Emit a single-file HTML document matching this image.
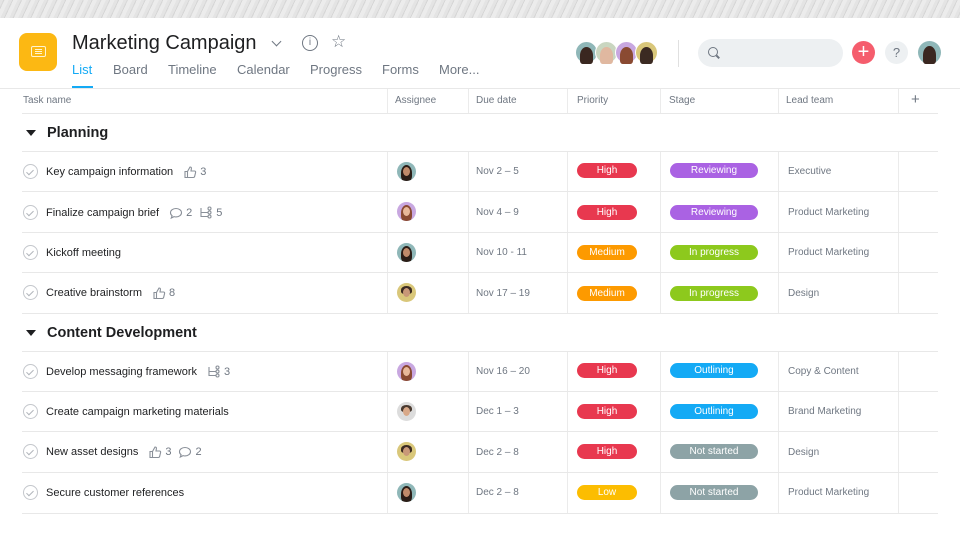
<!DOCTYPE html>
<html><head><meta charset="utf-8"><style>
*{margin:0;padding:0;box-sizing:border-box}
body{width:960px;height:547px;position:relative;background:#fff;font-family:"Liberation Sans",Arial,sans-serif;overflow:hidden;color:#1e1f21}
.a{position:absolute}
.top{left:0;top:0;width:960px;height:18px;background:repeating-linear-gradient(115deg,#e4e4e4 0 3px,#d6d6d6 3px 4px,#ececec 4px 8px)}
.tab{top:62px;font-size:13px;color:#6f7782}
.hl{left:22px;width:916px;height:1px;background:#e8e8e8}
.vl{width:1px;background:#ebebeb}
.ch{top:95px;font-size:10px;color:#6f7782}
.sec{left:47px;font-size:14.5px;font-weight:bold;color:#1e1f21}
.tri{left:26px;width:0;height:0;border-left:5px solid transparent;border-right:5px solid transparent;border-top:6px solid #1e1f21}
.chk{left:23px;width:15px;height:15px;border:1px solid #c4c7cc;border-radius:50%}
.chk:after{content:"";position:absolute;left:4px;top:3px;width:3px;height:6px;border:solid #b0b4ba;border-width:0 1px 1px 0;transform:rotate(45deg)}
.tn{left:46px;font-size:11px;color:#1e1f21;display:flex;align-items:center;gap:4px;height:14px}
.meta{font-size:11px;color:#6f7782;display:inline-flex;align-items:center;gap:3px;margin-left:6px}
.meta svg{width:14px;height:14px;fill:none;stroke:#8a9099;stroke-width:1.1}
.av{left:397px;width:19px;height:19px;border-radius:50%;overflow:hidden}
.av i{position:absolute;left:4px;top:3px;width:11px;height:16px;border-radius:50% 50% 30% 30%;background:#2b1d17}
.av b{position:absolute;left:6px;top:5px;width:7px;height:9px;border-radius:50%;background:#c08a6a}
.dt{left:476px;font-size:10px;color:#6f7782}
.p{left:577px;width:60px;height:15px;border-radius:8px;color:#fff;font-size:10px;text-align:center;line-height:15px}
.s{left:670px;width:88px;height:15px;border-radius:8px;color:#fff;font-size:10px;text-align:center;line-height:15px}
.lt{left:788px;font-size:10px;color:#6f7782}
</style></head><body>
<svg width="0" height="0" style="position:absolute">
<symbol id="th" viewBox="0 0 14 14"><path d="M2 6.5h2.5v6H2zM4.5 6.5l2.5-4.5c1 0 1.6.6 1.4 1.6L8 6h3.5c.8 0 1.3.7 1.1 1.4l-1 4.2c-.2.6-.6.9-1.2.9H4.5"/></symbol>
<symbol id="cm" viewBox="0 0 14 14"><path d="M7 2.5c3 0 5.5 1.8 5.5 4.2S10 10.9 7 10.9c-.7 0-1.3-.1-1.9-.3L2.3 12l.8-2.3C2 8.9 1.5 7.9 1.5 6.7 1.5 4.3 4 2.5 7 2.5z"/></symbol>
<symbol id="st" viewBox="0 0 14 14"><path d="M2 2v8.5h7M2 6.5h7"/><circle cx="10.5" cy="6.5" r="1.5"/><circle cx="10.5" cy="10.5" r="1.5"/><circle cx="10.5" cy="2.5" r="1.5"/></symbol>
</svg>
<div class="a top"></div>
<div class="a" style="left:19px;top:33px;width:38px;height:38px;border-radius:8px;background:#fcb813"></div>
<div class="a" style="left:31px;top:46px;width:15px;height:11px;border:1.5px solid #fff4d0;border-radius:2px"></div>
<div class="a" style="left:35px;top:49px;width:7px;height:1px;background:#fff4d0;box-shadow:0 2px 0 #fff4d0,0 4px 0 #fff4d0"></div>
<div class="a" style="left:72px;top:32px;font-size:20px;color:#1e1f21">Marketing Campaign</div>
<div class="a" style="left:273px;top:38px;width:7px;height:7px;border:solid #6f7782;border-width:0 1.5px 1.5px 0;transform:rotate(45deg)"></div>
<div class="a" style="left:302px;top:35px;width:16px;height:16px;border:1.3px solid #6f7782;border-radius:50%;font-size:10px;color:#6f7782;text-align:center;line-height:14px">i</div>
<div class="a" style="left:331px;top:32px;font-size:17px;color:#6f7782">☆</div>
<div class="a tab" style="left:72px;color:#14aaf5">List</div>
<div class="a" style="left:72px;top:86px;width:21px;height:2px;background:#14aaf5"></div>
<div class="a tab" style="left:113px">Board</div>
<div class="a tab" style="left:168px">Timeline</div>
<div class="a tab" style="left:237px">Calendar</div>
<div class="a tab" style="left:310px">Progress</div>
<div class="a tab" style="left:382px">Forms</div>
<div class="a tab" style="left:439px">More...</div>
<div class="a" style="left:575px;top:41px;width:23px;height:23px;border-radius:50%;background:#8fb7b8;border:1.5px solid #fff"></div>
<div class="a" style="left:595px;top:41px;width:23px;height:23px;border-radius:50%;background:#c9d6c0;border:1.5px solid #fff"></div>
<div class="a" style="left:615px;top:41px;width:23px;height:23px;border-radius:50%;background:#c8a7e0;border:1.5px solid #fff"></div>
<div class="a" style="left:635px;top:41px;width:23px;height:23px;border-radius:50%;background:#d9c77a;border:1.5px solid #fff"></div>
<div class="a" style="left:580px;top:47px;width:13px;height:17px;border-radius:50% 50% 20% 20%;background:#3a2720"></div>
<div class="a" style="left:600px;top:47px;width:13px;height:17px;border-radius:50% 50% 20% 20%;background:#e0b8a0"></div>
<div class="a" style="left:620px;top:47px;width:13px;height:17px;border-radius:50% 50% 20% 20%;background:#8a4a32"></div>
<div class="a" style="left:640px;top:47px;width:13px;height:17px;border-radius:50% 50% 20% 20%;background:#3b2a22"></div>
<div class="a" style="left:678px;top:40px;width:1px;height:27px;background:#e0e0e0"></div>
<div class="a" style="left:698px;top:39px;width:145px;height:28px;border-radius:14px;background:#edf0f2"></div>
<div class="a" style="left:708px;top:47px;width:10px;height:10px;border:1.5px solid #6f7782;border-radius:50%"></div>
<div class="a" style="left:716px;top:56px;width:4px;height:1.5px;background:#6f7782;transform:rotate(45deg)"></div>
<div class="a" style="left:852px;top:41px;width:23px;height:23px;border-radius:50%;background:#f55d6d;color:#fff;font-size:20px;line-height:22px;text-align:center">+</div>
<div class="a" style="left:885px;top:41px;width:23px;height:23px;border-radius:50%;background:#edf0f2;color:#6f7782;font-size:13px;line-height:23px;text-align:center">?</div>
<div class="a" style="left:918px;top:41px;width:23px;height:23px;border-radius:50%;background:#8fb7b8"></div>
<div class="a" style="left:923px;top:46px;width:13px;height:18px;border-radius:50% 50% 20% 20%;background:#3a2720"></div>
<div class="a" style="left:0;top:88px;width:960px;height:1px;background:#e8e8e8"></div>
<div class="a" style="left:0;top:89px;width:960px;height:24px">
<div class="a vl" style="left:387px;height:24px"></div><div class="a vl" style="left:468px;height:24px"></div><div class="a vl" style="left:567px;height:24px"></div><div class="a vl" style="left:660px;height:24px"></div><div class="a vl" style="left:778px;height:24px"></div><div class="a vl" style="left:898px;height:24px"></div></div>
<div class="a" style="left:0;top:151px;width:960px;height:162px">
<div class="a vl" style="left:387px;height:162px"></div><div class="a vl" style="left:468px;height:162px"></div><div class="a vl" style="left:567px;height:162px"></div><div class="a vl" style="left:660px;height:162px"></div><div class="a vl" style="left:778px;height:162px"></div><div class="a vl" style="left:898px;height:162px"></div></div>
<div class="a" style="left:0;top:351px;width:960px;height:162px">
<div class="a vl" style="left:387px;height:162px"></div><div class="a vl" style="left:468px;height:162px"></div><div class="a vl" style="left:567px;height:162px"></div><div class="a vl" style="left:660px;height:162px"></div><div class="a vl" style="left:778px;height:162px"></div><div class="a vl" style="left:898px;height:162px"></div></div>
<div class="a ch" style="left:23px">Task name</div>
<div class="a ch" style="left:395px">Assignee</div>
<div class="a ch" style="left:476px">Due date</div>
<div class="a ch" style="left:577px">Priority</div>
<div class="a ch" style="left:669px">Stage</div>
<div class="a ch" style="left:786px">Lead team</div>
<div class="a" style="left:911px;top:91px;font-size:15px;color:#6f7782">+</div>
<div class="a hl" style="top:113px"></div>
<div class="a tri" style="top:130px"></div><div class="a sec" style="top:125px">Planning</div>
<div class="a hl" style="top:151px"></div>
<div class="a hl" style="top:191px"></div>
<div class="a hl" style="top:232px"></div>
<div class="a hl" style="top:272px"></div>
<div class="a hl" style="top:313px"></div>
<div class="a tri" style="top:330px"></div><div class="a sec" style="top:325px">Content Development</div>
<div class="a hl" style="top:351px"></div>
<div class="a hl" style="top:391px"></div>
<div class="a hl" style="top:431px"></div>
<div class="a hl" style="top:472px"></div>
<div class="a hl" style="top:513px"></div>

<div class="a chk" style="top:164px"></div><div class="a tn" style="top:165px">Key campaign information <span class="meta"><svg><use href="#th"/></svg>3</span></div>
<div class="a av" style="top:162px;background:#8fb7b8"><i></i><b></b></div>
<div class="a dt" style="top:166px">Nov 2 – 5</div>
<div class="a p" style="top:163px;background:#e8384f">High</div>
<div class="a s" style="top:163px;background:#aa62e3">Reviewing</div>
<div class="a lt" style="top:166px">Executive</div>

<div class="a chk" style="top:205px"></div><div class="a tn" style="top:206px">Finalize campaign brief <span class="meta"><svg><use href="#cm"/></svg>2</span><span class="meta" style="margin-left:3px"><svg><use href="#st"/></svg>5</span></div>
<div class="a av" style="top:202px;background:#c8a7e0"><i style="background:#8a4a32"></i><b style="background:#e8b89a"></b></div>
<div class="a dt" style="top:207px">Nov 4 – 9</div>
<div class="a p" style="top:205px;background:#e8384f">High</div>
<div class="a s" style="top:205px;background:#aa62e3">Reviewing</div>
<div class="a lt" style="top:207px">Product Marketing</div>

<div class="a chk" style="top:245px"></div><div class="a tn" style="top:246px">Kickoff meeting</div>
<div class="a av" style="top:243px;background:#8fb7b8"><i></i><b></b></div>
<div class="a dt" style="top:247px">Nov 10 - 11</div>
<div class="a p" style="top:245px;background:#fd9a00">Medium</div>
<div class="a s" style="top:245px;background:#8dc91d">In progress</div>
<div class="a lt" style="top:247px">Product Marketing</div>

<div class="a chk" style="top:285px"></div><div class="a tn" style="top:286px">Creative brainstorm <span class="meta"><svg><use href="#th"/></svg>8</span></div>
<div class="a av" style="top:283px;background:#d9c77a"><i style="background:#3b2a22;height:8px"></i><b style="background:#c89878"></b></div>
<div class="a dt" style="top:288px">Nov 17 – 19</div>
<div class="a p" style="top:286px;background:#fd9a00">Medium</div>
<div class="a s" style="top:286px;background:#8dc91d">In progress</div>
<div class="a lt" style="top:288px">Design</div>

<div class="a chk" style="top:364px"></div><div class="a tn" style="top:365px">Develop messaging framework <span class="meta"><svg><use href="#st"/></svg>3</span></div>
<div class="a av" style="top:362px;background:#c8a7e0"><i style="background:#8a4a32"></i><b style="background:#e8b89a"></b></div>
<div class="a dt" style="top:366px">Nov 16 – 20</div>
<div class="a p" style="top:363px;background:#e8384f">High</div>
<div class="a s" style="top:363px;background:#14aaf5">Outlining</div>
<div class="a lt" style="top:366px">Copy &amp; Content</div>

<div class="a chk" style="top:404px"></div><div class="a tn" style="top:405px">Create campaign marketing materials</div>
<div class="a av" style="top:402px;background:#dcdcdc"><i style="background:#4a3a30;height:7px"></i><b style="background:#d8a888"></b></div>
<div class="a dt" style="top:406px">Dec 1 – 3</div>
<div class="a p" style="top:404px;background:#e8384f">High</div>
<div class="a s" style="top:404px;background:#14aaf5">Outlining</div>
<div class="a lt" style="top:406px">Brand Marketing</div>

<div class="a chk" style="top:444px"></div><div class="a tn" style="top:445px">New asset designs <span class="meta"><svg><use href="#th"/></svg>3</span><span class="meta" style="margin-left:3px"><svg><use href="#cm"/></svg>2</span></div>
<div class="a av" style="top:442px;background:#d9c77a"><i style="background:#3b2a22;height:8px"></i><b style="background:#c89878"></b></div>
<div class="a dt" style="top:447px">Dec 2 – 8</div>
<div class="a p" style="top:444px;background:#e8384f">High</div>
<div class="a s" style="top:444px;background:#8da3a6">Not started</div>
<div class="a lt" style="top:447px">Design</div>

<div class="a chk" style="top:485px"></div><div class="a tn" style="top:486px">Secure customer references</div>
<div class="a av" style="top:483px;background:#8fb7b8"><i></i><b></b></div>
<div class="a dt" style="top:487px">Dec 2 – 8</div>
<div class="a p" style="top:485px;background:#fcbd01">Low</div>
<div class="a s" style="top:485px;background:#8da3a6">Not started</div>
<div class="a lt" style="top:487px">Product Marketing</div>
</body></html>
